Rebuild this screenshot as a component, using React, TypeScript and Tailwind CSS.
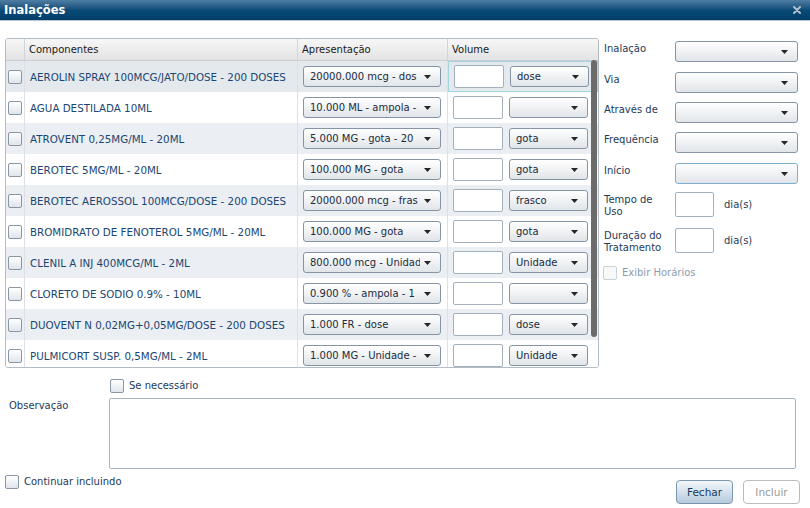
import React from "react";

const rows = [
  { name: "AEROLIN SPRAY 100MCG/JATO/DOSE - 200 DOSES", apr: "20000.000 mcg - dos", unit: "dose" },
  { name: "AGUA DESTILADA 10ML", apr: "10.000 ML - ampola -", unit: "" },
  { name: "ATROVENT 0,25MG/ML - 20ML", apr: "5.000 MG - gota - 20", unit: "gota" },
  { name: "BEROTEC 5MG/ML - 20ML", apr: "100.000 MG - gota", unit: "gota" },
  { name: "BEROTEC AEROSSOL 100MCG/DOSE - 200 DOSES", apr: "20000.000 mcg - fras", unit: "frasco" },
  { name: "BROMIDRATO DE FENOTEROL 5MG/ML - 20ML", apr: "100.000 MG - gota", unit: "gota" },
  { name: "CLENIL A INJ 400MCG/ML - 2ML", apr: "800.000 mcg - Unidad", unit: "Unidade" },
  { name: "CLORETO DE SODIO 0.9% - 10ML", apr: "0.900 % - ampola - 1", unit: "" },
  { name: "DUOVENT N 0,02MG+0,05MG/DOSE - 200 DOSES", apr: "1.000 FR - dose", unit: "dose" },
  { name: "PULMICORT SUSP. 0,5MG/ML - 2ML", apr: "1.000 MG - Unidade -", unit: "Unidade" },
];

function Arrow() {
  return (
    <svg width="7" height="4" viewBox="0 0 7 4" className="shrink-0 ml-[4px]">
      <path d="M0 0 H7 L3.5 4 Z" fill="#262626" />
    </svg>
  );
}

function Select({ text, w, focus }: { text: string; w: string; focus?: boolean }) {
  return (
    <div
      className={`${w} h-[21px] flex items-center rounded-[3px] border ${
        focus ? "border-[#7fb0cf]" : "border-[#8595a5]"
      } bg-gradient-to-b from-[#ffffff] to-[#e1e5e9] pl-[6px] pr-[9px] shadow-[inset_0_1px_0_#fff]`}
    >
      <span className="flex-1 overflow-hidden whitespace-nowrap text-[#1a2b3c]">{text}</span>
      <Arrow />
    </div>
  );
}

function Check({ disabled }: { disabled?: boolean }) {
  return (
    <div
      className={`w-[14px] h-[14px] shrink-0 rounded-[2px] border ${
        disabled ? "border-[#c9d0d7] bg-[#f6f8fa]" : "border-[#8a96a3] bg-gradient-to-b from-[#ffffff] to-[#dfe5ec]"
      }`}
    />
  );
}

export default function App() {
  return (
    <div
      className="w-[810px] h-[508px] bg-white overflow-hidden text-[10px] leading-[12px] text-[#1e3a58]"
      style={{ fontFamily: '"DejaVu Sans", Verdana, sans-serif' }}
    >
      {/* Title bar */}
      <div className="h-[20px] bg-gradient-to-b from-[#4f7ea3] via-[#0b4b78] to-[#003e69] flex items-center justify-between pl-[4px] pr-[9px]">
        <span className="text-white font-bold text-[11.5px] leading-[14px]">Inalações</span>
        <svg width="8" height="8" viewBox="0 0 8 8">
          <path d="M1 1 L7 7 M7 1 L1 7" stroke="#b4c0cb" strokeWidth="2" strokeLinecap="round" />
        </svg>
      </div>
      <div className="h-[1px] bg-[#b8c7d4]" />

      {/* Main */}
      <div className="flex pt-[17px] pl-[5px]">
        {/* Grid */}
        <div className="w-[594px] h-[330px] border border-[#b3bcc6] rounded-[3px] overflow-hidden relative flex flex-col">
          <div className="h-[22px] shrink-0 flex bg-gradient-to-b from-[#f7f7f7] to-[#e3e3e3] border-b border-[#c9ced4] text-[#1a1a1a]">
            <div className="w-[19px] border-r border-[#cfd4d9]" />
            <div className="w-[273px] border-r border-[#cfd4d9] flex items-center pl-[4px]">Componentes</div>
            <div className="w-[150px] border-r border-[#cfd4d9] flex items-center pl-[4px]">Apresentação</div>
            <div className="flex-1 flex items-center pl-[4px]">Volume</div>
          </div>
          <div className="flex-1 overflow-hidden">
            {rows.map((r, i) => (
              <div
                key={i}
                className={`h-[31px] flex ${i % 2 === 0 ? (i === 0 ? "bg-[#e4e9ee]" : "bg-[#ebeef2]") : "bg-white"}`}
              >
                <div className="w-[19px] border-r border-[#dde1e6] flex items-center pl-[2px]">
                  <Check />
                </div>
                <div className="w-[273px] border-r border-[#dde1e6] flex items-center pl-[5px] text-[#1c4672] whitespace-nowrap text-[10.3px]">
                  {r.name}
                </div>
                <div className="w-[150px] border-r border-[#dde1e6] flex items-center pl-[5px]">
                  <Select text={r.apr} w="w-[138px]" />
                </div>
                <div
                  className={`flex-1 flex items-center pl-[5px] ${
                    i === 0 ? "border border-[#a5d3de]" : ""
                  }`}
                >
                  <div className="w-[50px] h-[23px] border border-[#a3b1be] bg-white rounded-[2px]" />
                  <div className="w-[6px]" />
                  <Select text={r.unit} w="w-[79px]" />
                </div>
              </div>
            ))}
          </div>
          {/* scrollbar */}
          <div className="absolute left-[585px] top-[21px] w-[6px] h-[277px] rounded-[3px] bg-[#6b6b6b]" />
        </div>

        {/* Right panel */}
        <div className="ml-[5px] pt-[3px] flex flex-col w-[194px]">
          {[
            { l: "Inalação", mt: "mt-0" },
            { l: "Via", mt: "mt-[10px]" },
            { l: "Através de", mt: "mt-[9px]" },
            { l: "Frequência", mt: "mt-[9px]" },
            { l: "Início", mt: "mt-[10px]", focus: true },
          ].map((f, i) => (
            <div key={i} className={`flex ${f.mt}`}>
              <div className="w-[71px] pt-[2px] text-[#1e3a58]">{f.l}</div>
              <Select text="" w="w-[123px]" focus={f.focus} />
            </div>
          ))}
          <div className="flex mt-[8px] items-start">
            <div className="w-[71px] pt-[2px]">
              Tempo de
              <br />
              Uso
            </div>
            <div className="w-[39px] h-[25px] border border-[#a3b1be] rounded-[2px] bg-white" />
            <div className="ml-[10px] self-center">dia(s)</div>
          </div>
          <div className="flex mt-[10px] items-start">
            <div className="w-[71px] pt-[2px]">
              Duração do
              <br />
              Tratamento
            </div>
            <div className="w-[39px] h-[25px] border border-[#a3b1be] rounded-[2px] bg-white" />
            <div className="ml-[10px] self-center">dia(s)</div>
          </div>
          <div className="flex items-center mt-[12px] -ml-[1px]">
            <Check disabled />
            <span className="ml-[5px] text-[#8b9cae]">Exibir Horários</span>
          </div>
        </div>
      </div>

      {/* Bottom */}
      <div className="flex items-center mt-[11px] pl-[110px]">
        <Check />
        <span className="ml-[5px]">Se necessário</span>
      </div>
      <div className="flex mt-[5px]">
        <div className="w-[109px] pl-[9px] pt-[2px]">Observação</div>
        <div className="w-[687px] h-[71px] border border-[#a9b4bf] rounded-[2px] bg-white" />
      </div>
      <div className="flex justify-between mt-[6px] pl-[5px] pr-[10px]">
        <div className="flex items-center self-start">
          <Check />
          <span className="ml-[5px]">Continuar incluindo</span>
        </div>
        <div className="flex mt-[5px] gap-[10px]">
          <div className="w-[57px] h-[24px] rounded-[4px] border border-[#7b97b0] bg-gradient-to-b from-[#f4f8fb] to-[#b6cadc] flex items-center justify-center text-[#163a5c] text-[10.5px]">
            Fechar
          </div>
          <div className="w-[57px] h-[24px] rounded-[4px] border border-[#bcbcbc] bg-white flex items-center justify-center text-[#9a9a9a] text-[10.5px]">
            Incluir
          </div>
        </div>
      </div>
    </div>
  );
}
